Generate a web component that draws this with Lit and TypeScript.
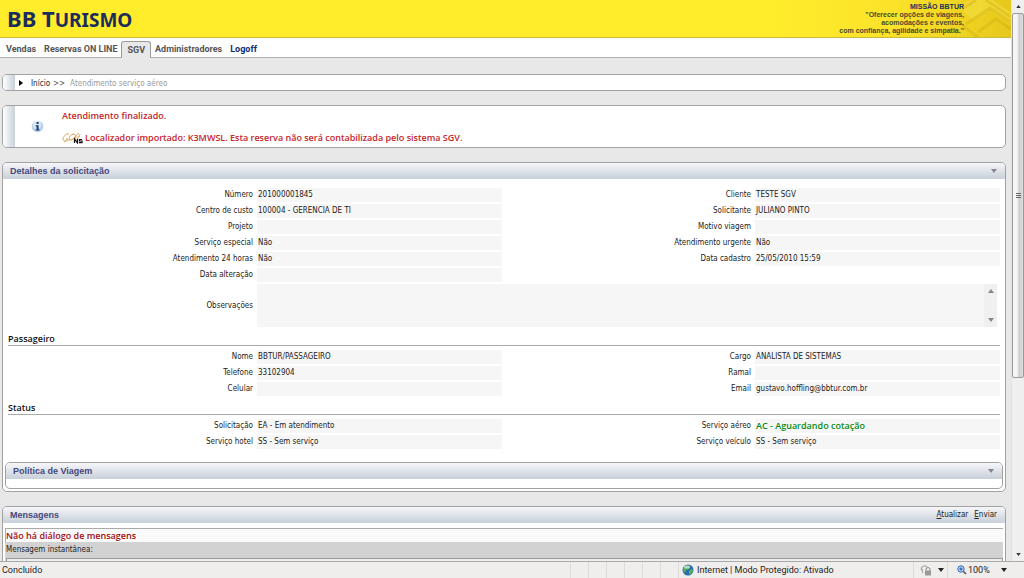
import { LitElement, html, css, svg } from "lit";
import { customElement, property } from "lit/decorators.js";

type Field = { label: string; value: string; strong?: boolean };

const request: Field[] = [
  { label: "Número", value: "201000001845" },
  { label: "Cliente", value: "TESTE SGV" },
  { label: "Centro de custo", value: "100004 - GERENCIA DE TI" },
  { label: "Solicitante", value: "JULIANO PINTO" },
  { label: "Projeto", value: "" },
  { label: "Motivo viagem", value: "" },
  { label: "Serviço especial", value: "Não" },
  { label: "Atendimento urgente", value: "Não" },
  { label: "Atendimento 24 horas", value: "Não" },
  { label: "Data cadastro", value: "25/05/2010 15:59" },
  { label: "Data alteração", value: "" },
];

const passenger: Field[] = [
  { label: "Nome", value: "BBTUR/PASSAGEIRO" },
  { label: "Cargo", value: "ANALISTA DE SISTEMAS" },
  { label: "Telefone", value: "33102904" },
  { label: "Ramal", value: "" },
  { label: "Celular", value: "" },
  { label: "Email", value: "gustavo.hoffling@bbtur.com.br" },
];

const status: Field[] = [
  { label: "Solicitação", value: "EA - Em atendimento" },
  { label: "Serviço aéreo", value: "AC - Aguardando cotação", strong: true },
  { label: "Serviço hotel", value: "SS - Sem serviço" },
  { label: "Serviço veículo", value: "SS - Sem serviço" },
];

const arrow = (up: boolean, cls = "arrow") => html`<svg class=${cls} viewBox="0 0 6 4" aria-hidden="true">
  ${up ? svg`<path d="M3 0 6 4H0z" />` : svg`<path d="M0 0H6L3 4z" />`}
</svg>`;

@customElement("field-grid")
class FieldGrid extends LitElement {
  @property({ attribute: false }) fields: Field[] = [];

  static styles = css`
    :host { display: block; }
    .grid {
      display: grid;
      grid-template-columns: repeat(4, minmax(0, 1fr));
      gap: 2px 4px;
      margin: 0;
    }
    .label { text-align: right; line-height: 14px; }
    .value {
      margin: 0;
      padding-left: 1px;
      min-height: 14px;
      line-height: 14px;
      background: #f6f6f6;
      white-space: nowrap;
    }
    .strong { color: #0c8a12; font: 600 9px/14px "Open Sans", sans-serif; }
  `;

  render() {
    return html`<dl class="grid">
      ${this.fields.map(
        (f) => html`<dt class="label">${f.label}</dt>
          <dd class="value ${f.strong ? "strong" : ""}">${f.value}</dd>`
      )}
    </dl>`;
  }
}

@customElement("app-root")
class AppRoot extends LitElement {
  static styles = css`
    :host {
      display: flex;
      flex-direction: column;
      height: 100vh;
      overflow: hidden;
      background: #e8e8e8;
      color: #222;
      font-family: "DejaVu Sans Condensed", "DejaVu Sans", sans-serif;
      font-size: 8px;
      line-height: 14px;
    }
    * { box-sizing: border-box; }
    a { color: inherit; text-decoration: none; }
    button { font: inherit; color: inherit; background: none; border: 0; padding: 0; }
    .window { flex: 1; min-height: 0; display: flex; }
    .page { flex: 1; min-width: 0; overflow: hidden; }

    .banner {
      height: 38px;
      display: flex;
      justify-content: space-between;
      background: linear-gradient(90deg, #ffed2b 75%, #fce32a 88%, #e6c81c);
      border-bottom: 1px solid #c9b93a;
    }
    .logo {
      padding-left: 7px;
      margin: 0;
      color: #1c2c5b;
      font: bold 22px/36px "Noto Sans", sans-serif;
    }
    .logo-small { font-size: 19px; }
    .mission { display: flex; color: #4a4a2c; font: bold 7px/8px "Liberation Sans", sans-serif; }
    .mission-text { margin: 0; padding-top: 3px; text-align: right; white-space: nowrap; }
    .mission-title { display: block; color: #24315c; }
    .emblem { width: 47px; height: 37px; }

    .nav {
      display: flex;
      align-items: flex-end;
      height: 20px;
      padding-left: 2px;
      background: #fff;
      border-bottom: 1px solid #b0b0b0;
      color: #555;
      font: bold 9px/14px "Roboto", sans-serif;
    }
    .tab { padding: 0 4px; line-height: 16px; white-space: nowrap; }
    .tab-active {
      padding: 0 5px;
      margin-bottom: -1px;
      background: #e8e8e8;
      border: 1px solid #999;
      border-bottom: 0;
      border-radius: 3px 3px 0 0;
    }
    .tab-out { color: #0a2f7a; }

    .content { display: flex; flex-direction: column; gap: 14px; padding: 16px 5px 0 2px; }
    .box {
      display: flex;
      align-items: center;
      background: #fff;
      border: 1px solid #a2a2a2;
      border-radius: 5px;
      overflow: hidden;
    }
    .edge { align-self: stretch; width: 12px; background: linear-gradient(90deg, #fff, #c9d0d8); }
    .crumbs { height: 17px; }
    .trail { padding-top: 2px; line-height: 13px; }
    .crumb-arrow { width: 4px; height: 6px; margin: 0 8px 0 4px; }
    .crumb-sep { color: #555; padding: 0 5px 0 3px; }
    .crumb-here { color: #999; }
    .notice { height: 43px; color: #c4262b; font: 600 9px/14px "Open Sans", sans-serif; }
    .info { width: 13px; height: 13px; margin: 0 18px 0 16px; }
    .notice-text { display: flex; flex-direction: column; gap: 8px; }
    .notice-line { display: flex; align-items: center; gap: 2px; margin: 0; }
    .gol { width: 21px; height: 12px; }

    .panel { background: #fff; border: 1px solid #a2a2a2; border-radius: 5px; }
    .panel-head {
      display: flex;
      align-items: center;
      justify-content: space-between;
      height: 16px;
      padding: 0 8px 0 7px;
      border-radius: 4px 4px 0 0;
      background: linear-gradient(#f5f6f9, #c8d0d9);
    }
    .panel-title {
      margin: 0;
      color: #45477c;
      font: bold 9px/16px "Liberation Sans", sans-serif;
    }
    .toggle { display: flex; }
    .arrow { width: 6px; height: 4px; fill: #85858b; }
    .details { padding: 9px 5px 2px; }
    .notes {
      display: grid;
      grid-template-columns: repeat(4, minmax(0, 1fr));
      column-gap: 4px;
      margin: 2px 0;
      align-items: center;
    }
    .notes-label { text-align: right; }
    .notes-box {
      grid-column: span 3;
      display: flex;
      height: 43px;
      margin-right: 3px;
      background: #f6f6f6;
    }
    .notes-input {
      flex: 1;
      border: 0;
      padding: 1px;
      background: none;
      font: inherit;
      resize: none;
      overflow: hidden;
    }
    .notes-scroll {
      width: 13px;
      display: flex;
      flex-direction: column;
      align-items: center;
      justify-content: space-between;
      padding: 5px 0;
      background: #f0f0f0;
    }
    .section {
      margin: 5px 0 4px;
      border-bottom: 1px solid #aaa;
      color: #111;
      font: 600 9px/13px "Open Sans", sans-serif;
    }
    .sub { margin: 13px -3px 0; }
    .sub-body { height: 9px; }
    .actions { display: flex; gap: 6px; }
    .messages { padding: 5px 2px 0; }
    .empty {
      margin: 0;
      border: 1px solid #aaa;
      border-width: 1px 0 0 1px;
      background: #fafafa;
      color: #a00d12;
      font: 600 9px/13px "Open Sans", sans-serif;
    }
    .instant {
      display: block;
      height: 30px;
      padding-left: 1px;
      background: #d2d2d2;
      line-height: 16px;
    }
    .instant-input { display: block; width: 100%; height: 13px; border: 1px solid #999; background: #eee; }

    .scroll {
      width: 13px;
      display: flex;
      flex-direction: column;
      align-items: center;
      background: #efefef;
      border-left: 1px solid #e2e2e2;
    }
    .scroll-arrow { width: 5px; height: 3px; margin: 5px 0; fill: #333; }
    .thumb {
      flex: 0 1 365px;
      align-self: stretch;
      display: flex;
      align-items: center;
      justify-content: center;
      border: 1px solid #9a9a9a;
      border-radius: 2px;
      background: linear-gradient(90deg, #f6f6f6 40%, #cfcfd1 60%, #dcdcde);
    }
    .grip { width: 5px; height: 7px; }
    .track { flex: 1; }

    .statusbar {
      display: flex;
      align-items: stretch;
      height: 17px;
      border-top: 1px solid #aaa;
      background: #f0eeed;
      color: #222;
      font: 9px/17px "Roboto", sans-serif;
      white-space: nowrap;
    }
    .done { flex: 1; padding-left: 2px; }
    .cell { width: 18px; border-left: 1px solid #dcdcdc; }
    .zone { width: 235px; display: flex; align-items: center; gap: 3px; padding-left: 3px; border-left: 1px solid #dcdcdc; }
    .globe { width: 12px; height: 12px; }
    .tool {
      display: flex;
      align-items: center;
      gap: 6px;
      padding: 0 3px 0 6px;
      width: 34px;
      border-left: 1px solid #dcdcdc;
    }
    .zoom { width: 77px; padding: 0 17px 0 9px; }
    .zoom-value { display: flex; flex: 1; gap: 1px; align-items: center; }
    .lens { width: 10px; height: 10px; }
    .lock { width: 12px; height: 12px; }
    .drop { width: 6px; height: 4px; fill: #222; }
  `;

  render() {
    return html`
      <div class="window">
        <main class="page">
          <header class="banner">
            <h1 class="logo">BB T<span class="logo-small">URISMO</span></h1>
            <div class="mission">
              <p class="mission-text">
                <span class="mission-title">MISSÃO BBTUR</span>
                "Oferecer opções de viagens,<br />acomodações e eventos,<br />com confiança, agilidade e simpatia."
              </p>
              <svg class="emblem" viewBox="0 0 47 37" aria-hidden="true">
                <path d="M0 3 6 0H28L47 13V24L26 9 10 20 0 13z" fill="#f3dc3c" fill-opacity=".7" />
                <g fill="none" stroke="#cfae14" stroke-opacity=".4" stroke-width="3">
                  <path d="M0 8 12 0M2 24 26 8 47 22M14 32 32 19 47 29M22 0 47 17M0 27 14 37" />
                </g>
              </svg>
            </div>
          </header>
          <nav class="nav">
            <a class="tab" href="#vendas">Vendas</a>
            <a class="tab" href="#reservas">Reservas ON LINE</a>
            <a class="tab tab-active" href="#sgv">SGV</a>
            <a class="tab" href="#administradores">Administradores</a>
            <a class="tab tab-out" href="#logoff">Logoff</a>
          </nav>
          <div class="content">
            <div class="box crumbs">
              <span class="edge"></span>
              <svg class="crumb-arrow" viewBox="0 0 4 6" aria-hidden="true"><path d="M0 0 4 3 0 6z" /></svg>
              <div class="trail">
                <a href="#inicio">Início</a><span class="crumb-sep">&gt;&gt;</span><span class="crumb-here">Atendimento serviço aéreo</span>
              </div>
            </div>
            <div class="box notice">
              <span class="edge"></span>
              <svg class="info" viewBox="0 0 13 13" aria-hidden="true">
                <circle cx="6.500" cy="6.500" r="5.800" fill="#b9cfe9" />
                <circle cx="6" cy="5" r="4" fill="#dfeaf7" />
                <path d="M5.600 2h2v2h-2zM4.600 5.200h3v4.200h1v1.200h-4V9.400h1v-3h-1z" fill="#163a75" />
              </svg>
              <div class="notice-text">
                <p class="notice-line">Atendimento finalizado.</p>
                <p class="notice-line">
                  <svg class="gol" viewBox="0 0 21 12" aria-hidden="true">
                    <g fill="none" stroke="#dda45e" stroke-width="1">
                      <path d="M7 2C4 1 1 5 1 7s2 3 5 0H4M12 2c-3 0-5 3-5 5s5 1 6-2-1-4-3-2M17 1c-2 1-4 4-4 6s3 1 5-5" />
                      <path d="M2 10Q8 8 18 4" stroke-opacity=".6" />
                    </g>
                    <path d="M12.500 11V7l3 4V7M20 7.500h-2.500V9H20v1.600h-3" fill="none" stroke="#111" stroke-width="1.200" />
                  </svg>
                  Localizador importado: K3MWSL. Esta reserva não será contabilizada pelo sistema SGV.
                </p>
              </div>
            </div>
            <section class="panel">
              <header class="panel-head">
                <h2 class="panel-title">Detalhes da solicitação</h2>
                <button class="toggle" aria-label="Recolher detalhes">${arrow(false)}</button>
              </header>
              <div class="details">
                <field-grid .fields=${request}></field-grid>
                <div class="notes">
                  <label class="notes-label" for="notes">Observações</label>
                  <div class="notes-box">
                    <textarea class="notes-input" id="notes" readonly></textarea>
                    <span class="notes-scroll">${arrow(true)}${arrow(false)}</span>
                  </div>
                </div>
                <h3 class="section">Passageiro</h3>
                <field-grid .fields=${passenger}></field-grid>
                <h3 class="section">Status</h3>
                <field-grid .fields=${status}></field-grid>
                <section class="panel sub">
                  <header class="panel-head">
                    <h2 class="panel-title">Política de Viagem</h2>
                    <button class="toggle" aria-label="Expandir política">${arrow(false)}</button>
                  </header>
                  <div class="sub-body"></div>
                </section>
              </div>
            </section>
            <section class="panel">
              <header class="panel-head">
                <h2 class="panel-title">Mensagens</h2>
                <div class="actions">
                  <button><u>A</u>tualizar</button>
                  <button><u>E</u>nviar</button>
                </div>
              </header>
              <div class="messages">
                <p class="empty">Não há diálogo de mensagens</p>
                <label class="instant">Mensagem instantânea:<input class="instant-input" /></label>
              </div>
            </section>
          </div>
        </main>
        <div class="scroll" aria-hidden="true">
          ${arrow(true, "scroll-arrow")}
          <div class="thumb">
            <svg class="grip" viewBox="0 0 5 7"><path d="M0 1.500h5M0 3.500h5M0 5.500h5" stroke="#666" /></svg>
          </div>
          <div class="track"></div>
          ${arrow(false, "scroll-arrow")}
        </div>
      </div>
      <footer class="statusbar">
        <span class="done">Concluído</span>
        ${[1, 2, 3, 4, 5, 6].map(() => html`<span class="cell"></span>`)}
        <span class="zone">
          <svg class="globe" viewBox="0 0 12 12" aria-hidden="true">
            <circle cx="6" cy="6" r="5.500" fill="#2b6fa8" />
            <path d="M2 3Q5 0 8 2L7 5 4 6 3 9Q0 6 2 3M7 7l3-2 1 2-2 3-2 0z" fill="#58b35c" />
            <ellipse cx="5" cy="3" rx="3" ry="1.500" fill="#d8f0f5" fill-opacity=".7" />
          </svg>
          Internet | Modo Protegido: Ativado
        </span>
        <button class="tool" aria-label="Privacidade">
          <svg class="lock" viewBox="0 0 12 12" aria-hidden="true">
            <path d="M1 6C1 2 5 1 7 3M1 6l2-1M3 9 2 6" fill="none" stroke="#aaa" stroke-width="1.200" />
            <path d="M6 7V5.500a2 2 0 0 1 4 0V7" fill="none" stroke="#888" />
            <rect x="5" y="6.500" width="6" height="5" fill="#999" />
          </svg>
          ${arrow(false, "drop")}
        </button>
        <button class="tool zoom">
          <span class="zoom-value">
            <svg class="lens" viewBox="0 0 10 10" aria-hidden="true">
              <path d="M6 6 9 9" stroke="#555" stroke-width="1.600" />
              <circle cx="4" cy="4" r="3.200" fill="#cfe4fa" stroke="#2a62b5" />
              <path d="M4 2.200v3.600M2.200 4h3.600" stroke="#1c4f9f" />
            </svg>
            100%
          </span>
          ${arrow(false, "drop")}
        </button>
      </footer>
    `;
  }
}
